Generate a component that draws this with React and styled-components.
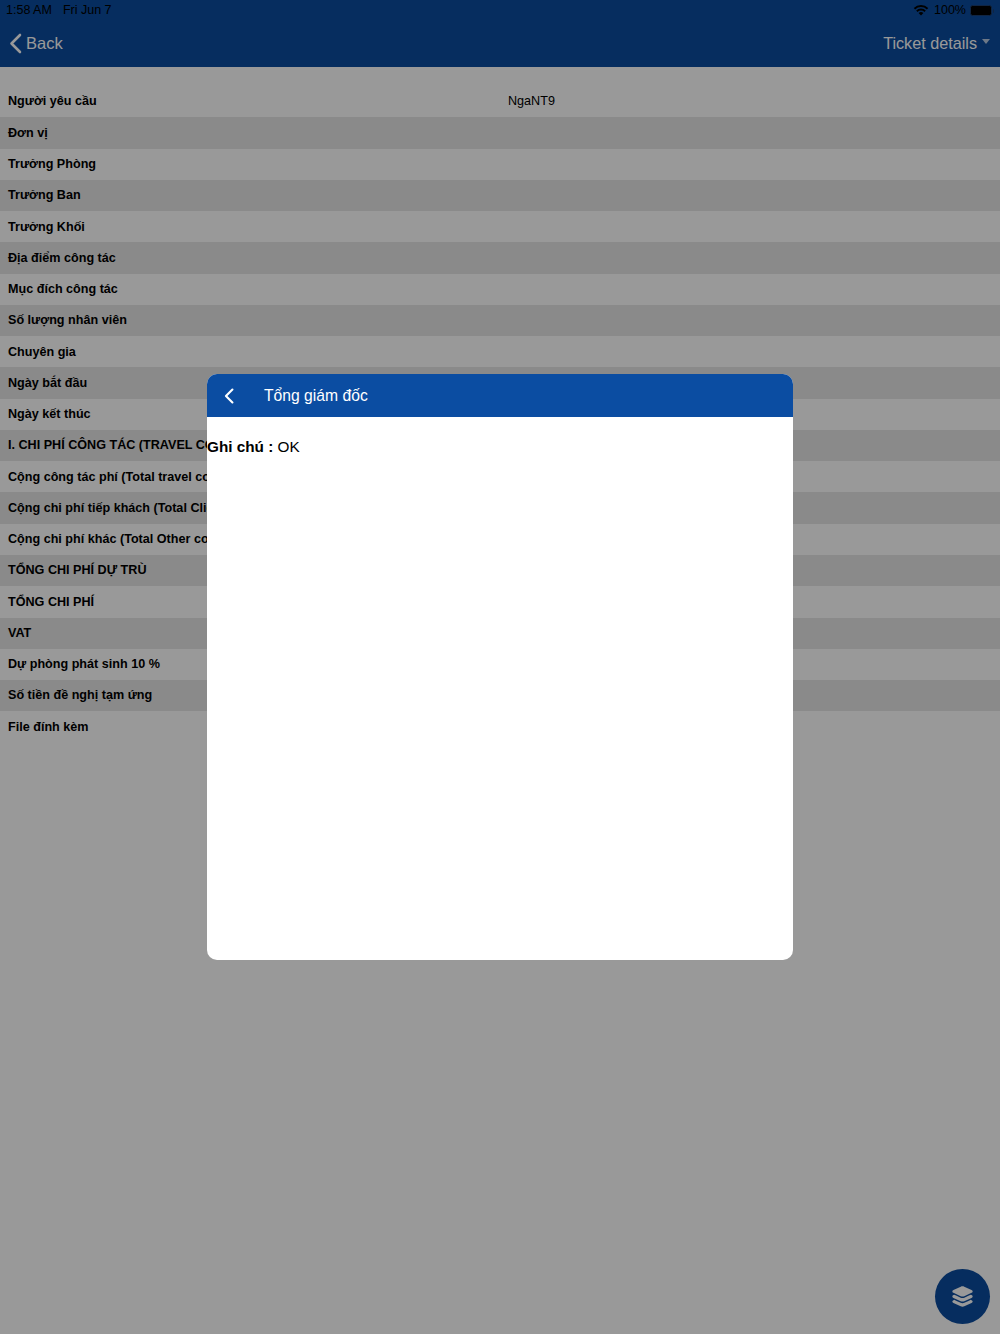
import React from 'react';
import styled, { createGlobalStyle } from 'styled-components';
import { IoLayers } from 'react-icons/io5';

const GlobalStyle = createGlobalStyle`
  html, body {
    margin: 0;
    padding: 0;
    background: #fff;
    font-family: "Liberation Sans", Arial, sans-serif;
  }
`;

const Page = styled.div`
  position: relative;
  width: 1000px;
  height: 1334px;
  overflow: hidden;
  background: #fff;
`;

const TopBar = styled.header`
  height: 67px;
  box-sizing: border-box;
  background: #0a4b9e;
  display: flex;
  flex-direction: column;
`;

const StatusBar = styled.div`
  height: 20px;
  padding: 0 8px 0 6px;
  display: flex;
  align-items: center;
  justify-content: space-between;
  font-size: 12.5px;
  color: #000;
`;

const StatusGroup = styled.div`
  display: flex;
  align-items: center;
  gap: ${(p) => p.$gap || 4}px;
`;

const Battery = styled.span`
  position: relative;
  display: block;
  width: 20px;
  height: 9px;
  border-radius: 2.5px;
  background: #000;
  border: 1px solid #1c3f70;
  box-sizing: content-box;
  &::after {
    content: '';
    position: absolute;
    right: -3px;
    top: 3px;
    width: 1.5px;
    height: 4px;
    background: #1c3f70;
    border-radius: 0 1px 1px 0;
  }
`;

const BatteryLabel = styled.span`
  margin: 0 -1px 0 0;
`;

const NavBar = styled.div`
  flex: 1;
  display: flex;
  align-items: center;
  justify-content: space-between;
  padding: 0 10px 1px 9px;
`;

const BackLink = styled.div`
  display: flex;
  align-items: center;
  gap: 4px;
  font-size: 16.5px;
  color: #fff;
`;

const NavTitle = styled.div`
  display: flex;
  align-items: center;
  gap: 5px;
  font-size: 16.2px;
  color: #fff;
`;

const Caret = styled.span`
  width: 0;
  height: 0;
  margin-top: -4px;
  border-left: 4.5px solid transparent;
  border-right: 4.5px solid transparent;
  border-top: 5px solid rgba(255, 255, 255, 0.7);
`;

const Rows = styled.div`
  padding-top: 19px;
`;

const Row = styled.div`
  display: grid;
  grid-template-columns: 500px 500px;
  height: 31.27px;
  box-sizing: border-box;
  padding-bottom: 0.4px;
  align-items: center;
  background: ${(p) => (p.$striped ? '#e6e6e6' : '#fff')};
  font-size: 12.6px;
  color: #000;
`;

const Label = styled.div`
  padding-left: 8px;
  font-weight: 700;
  white-space: nowrap;
`;

const Value = styled.div`
  padding-left: 8px;
`;

const Fab = styled.div`
  position: absolute;
  right: 10px;
  bottom: 10px;
  width: 55px;
  height: 55px;
  border-radius: 50%;
  background: #0a4b9e;
  display: flex;
  align-items: center;
  justify-content: center;
  color: #fff;
  font-size: 25px;
`;

const Scrim = styled.div`
  position: absolute;
  inset: 0;
  background: rgba(0, 0, 0, 0.4);
  display: flex;
  align-items: center;
  justify-content: center;
`;

const Modal = styled.div`
  width: 586px;
  height: 586px;
  border-radius: 10px;
  background: #fff;
  overflow: hidden;
`;

const ModalHeader = styled.div`
  height: 43px;
  background: #0b4da2;
  color: #fff;
  display: flex;
  align-items: center;
  padding-left: 17px;
  font-size: 15.7px;
`;

const ModalTitle = styled.span`
  margin-left: 30px;
`;

const ModalBody = styled.div`
  padding-top: 21px;
  font-size: 15.3px;
  line-height: 18px;
  color: #000;
`;

const labels = [
  'Người yêu cầu',
  'Đơn vị',
  'Trưởng Phòng',
  'Trưởng Ban',
  'Trưởng Khối',
  'Địa điểm công tác',
  'Mục đích công tác',
  'Số lượng nhân viên',
  'Chuyên gia',
  'Ngày bắt đầu',
  'Ngày kết thúc',
  'I. CHI PHÍ CÔNG TÁC (TRAVEL COST)',
  'Cộng công tác phí (Total travel cost)',
  'Cộng chi phí tiếp khách (Total Client cost)',
  'Cộng chi phí khác (Total Other cost)',
  'TỔNG CHI PHÍ DỰ TRÙ',
  'TỔNG CHI PHÍ',
  'VAT',
  'Dự phòng phát sinh 10 %',
  'Số tiền đề nghị tạm ứng',
  'File đính kèm',
];

function WifiIcon() {
  return (
    <svg width="16" height="12" viewBox="0 0 16 12" fill="#000">
      <path d="M8 11.6 5.6 9.1a3.4 3.4 0 0 1 4.8 0L8 11.6Z" />
      <path d="M4.5 8 3.2 6.6a6.8 6.8 0 0 1 9.6 0L11.5 8a5 5 0 0 0-7 0Z" />
      <path d="M2.1 5.5.8 4.1a10.2 10.2 0 0 1 14.4 0l-1.3 1.4a8.4 8.4 0 0 0-11.8 0Z" />
    </svg>
  );
}

function Chevron({ width, height, weight }) {
  return (
    <svg width={width} height={height} viewBox="0 0 13 21" fill="none" stroke="#fff" strokeWidth={weight} strokeLinecap="round" strokeLinejoin="round">
      <path d="M11 2 2.5 10.5 11 19" />
    </svg>
  );
}

export default function App() {
  return (
    <Page>
      <GlobalStyle />
      <TopBar>
        <StatusBar>
          <StatusGroup $gap={11}>
            <span>1:58 AM</span>
            <span>Fri Jun 7</span>
          </StatusGroup>
          <StatusGroup $gap={5}>
            <WifiIcon />
            <BatteryLabel>100%</BatteryLabel>
            <Battery />
          </StatusGroup>
        </StatusBar>
        <NavBar>
          <BackLink>
            <Chevron width={13} height={21} weight={2.6} />
            Back
          </BackLink>
          <NavTitle>
            Ticket details
            <Caret />
          </NavTitle>
        </NavBar>
      </TopBar>
      <Rows>
        {labels.map((label, i) => (
          <Row key={label} $striped={i % 2 === 1}>
            <Label>{label}</Label>
            {i === 0 && <Value>NgaNT9</Value>}
          </Row>
        ))}
      </Rows>
      <Fab>
        <IoLayers />
      </Fab>
      <Scrim>
        <Modal>
          <ModalHeader>
            <Chevron width={10} height={16} weight={2.8} />
            <ModalTitle>Tổng giám đốc</ModalTitle>
          </ModalHeader>
          <ModalBody>
            <b>Ghi chú : </b>OK
          </ModalBody>
        </Modal>
      </Scrim>
    </Page>
  );
}
